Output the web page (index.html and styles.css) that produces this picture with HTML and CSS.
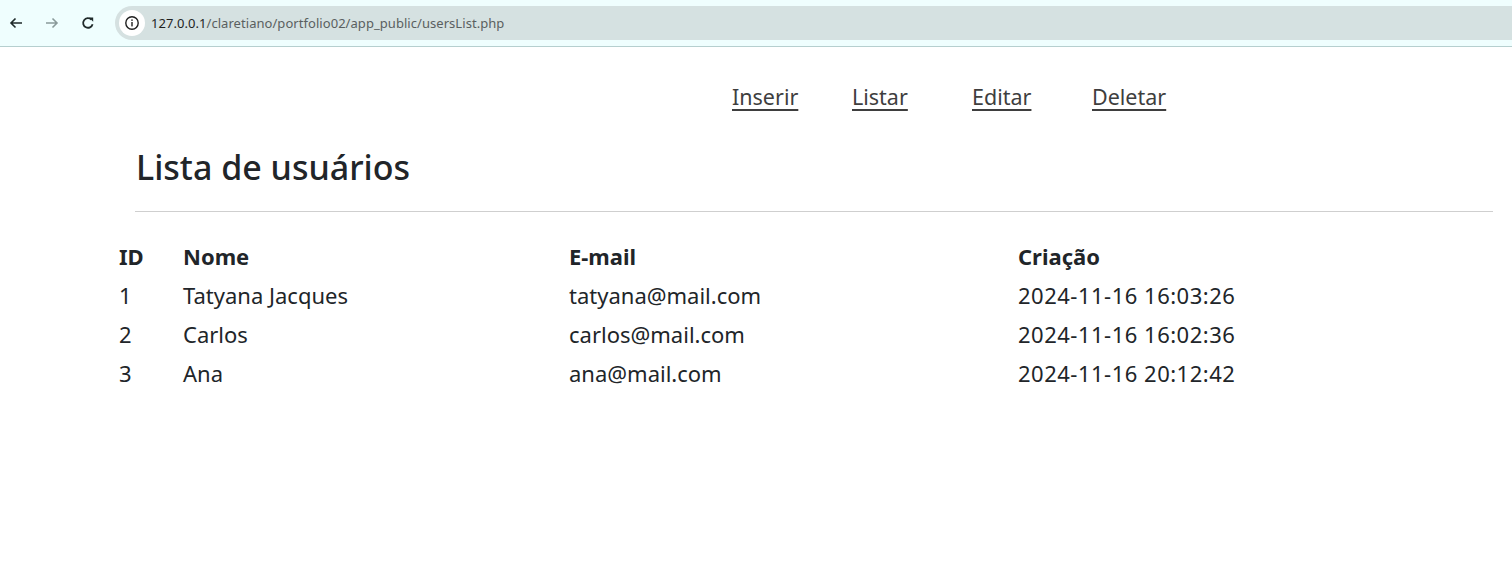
FILE: index.html
```html
<!DOCTYPE html>
<html lang="pt-BR">
<head>
<meta charset="utf-8">
<title>Lista de usuários</title>
<link rel="stylesheet" href="styles.css">
</head>
<body>
<div class="chrome">
  <div class="nav-btns">
    <span class="btn">
      <svg width="16" height="16" viewBox="0 0 16 16"><path d="M14 8H3M7.5 3.5L3 8l4.5 4.5" fill="none" stroke="#1f2a2a" stroke-width="1.6"/></svg>
    </span>
    <span class="btn">
      <svg width="16" height="16" viewBox="0 0 16 16"><path d="M2 8h11M8.5 3.5L13 8l-4.5 4.5" fill="none" stroke="#8a9a9a" stroke-width="1.6"/></svg>
    </span>
    <span class="btn">
      <svg width="16" height="16" viewBox="0 0 16 16"><path d="M12.6 9.2A4.8 4.8 0 1 1 11.4 4.6" fill="none" stroke="#1f2a2a" stroke-width="1.8"/><path d="M9 2.6h4.2v4.2z" fill="#1f2a2a"/></svg>
    </span>
  </div>
  <div class="omnibox">
    <span class="info">
      <svg width="16" height="16" viewBox="0 0 16 16"><circle cx="8" cy="8" r="6.2" fill="none" stroke="#1f1f1f" stroke-width="1.4"/><rect x="7.3" y="7" width="1.4" height="4.4" fill="#1f1f1f"/><rect x="7.3" y="4.4" width="1.4" height="1.5" fill="#1f1f1f"/></svg>
    </span>
    <span class="url"><span class="host">127.0.0.1</span>/claretiano/portfolio02/app_public/usersList.php</span>
  </div>
</div>

<div class="page">
  <nav class="menu">
    <ul>
      <li><a href="#">Inserir</a></li>
      <li><a href="#">Listar</a></li>
      <li><a href="#">Editar</a></li>
      <li><a href="#">Deletar</a></li>
    </ul>
  </nav>

  <h1 class="title">Lista de usuários</h1>
  <hr class="rule">

  <table class="users">
    <thead>
      <tr><th class="c-id">ID</th><th class="c-nome">Nome</th><th class="c-mail">E-mail</th><th>Criação</th></tr>
    </thead>
    <tbody>
      <tr><td>1</td><td>Tatyana Jacques</td><td>tatyana@mail.com</td><td class="date">2024-11-16 16:03:26</td></tr>
      <tr><td>2</td><td>Carlos</td><td>carlos@mail.com</td><td class="date">2024-11-16 16:02:36</td></tr>
      <tr><td>3</td><td>Ana</td><td>ana@mail.com</td><td class="date">2024-11-16 20:12:42</td></tr>
    </tbody>
  </table>
</div>
</body>
</html>
```

FILE: styles.css
```css
* { box-sizing: border-box; }
html, body { margin: 0; padding: 0; background: #fff; }
body {
  font-family: "Noto Sans", "Open Sans", sans-serif;
  color: #212529;
}

.chrome {
  height: 47px;
  background: #effefe;
  border-bottom: 1px solid #b6cfcf;
  display: flex;
  align-items: flex-start;
  padding-top: 6px;
}
.nav-btns {
  display: flex;
  padding-left: 0;
  width: 115px;
}
.btn {
  width: 36px;
  height: 34px;
  display: flex;
  align-items: center;
  justify-content: center;
}
.btn:first-child { margin-left: -2px; }
.omnibox {
  flex: 1;
  height: 34px;
  background: #d5e1e1;
  border-radius: 17px 0 0 17px;
  display: flex;
  align-items: center;
  padding-left: 4px;
}
.info {
  width: 26px;
  height: 26px;
  border-radius: 50%;
  background: #fff;
  display: flex;
  align-items: center;
  justify-content: center;
}
.url {
  margin-left: 6px;
  font-family: "Noto Sans", sans-serif;
  font-size: 13px;
  color: #5a5f60;
  letter-spacing: 0.05px;
}
.host { color: #1f1f1f; }

.page { padding: 0; }

.menu ul {
  list-style: none;
  margin: 0;
  padding: 33px 0 0 732px;
  display: flex;
}
.menu li { width: 120px; }
.menu a {
  font-size: 21.5px;
  line-height: 33px;
  color: #3e3e3e;
  text-decoration: underline;
  text-decoration-thickness: 2px;
  text-underline-offset: 4px;
}

.title {
  margin: 32px 0 0 136px;
  font-size: 34px;
  font-weight: 500;
  line-height: 44px;
}
.rule {
  margin: 22px 19px 0 135px;
  border: 0;
  border-top: 1px solid #cfcfcf;
}

.users {
  margin: 24px 0 0 115px;
  border-collapse: collapse;
  font-size: 22px;
}
.users th, .users td {
  text-align: left;
  padding: 0 4px;
  height: 39px;
  vertical-align: middle;
}
.users th { font-weight: 700; }
.users .date { letter-spacing: 0.5px; }
.c-id { width: 64px; }
.c-nome { width: 386px; }
.c-mail { width: 449px; }
```
